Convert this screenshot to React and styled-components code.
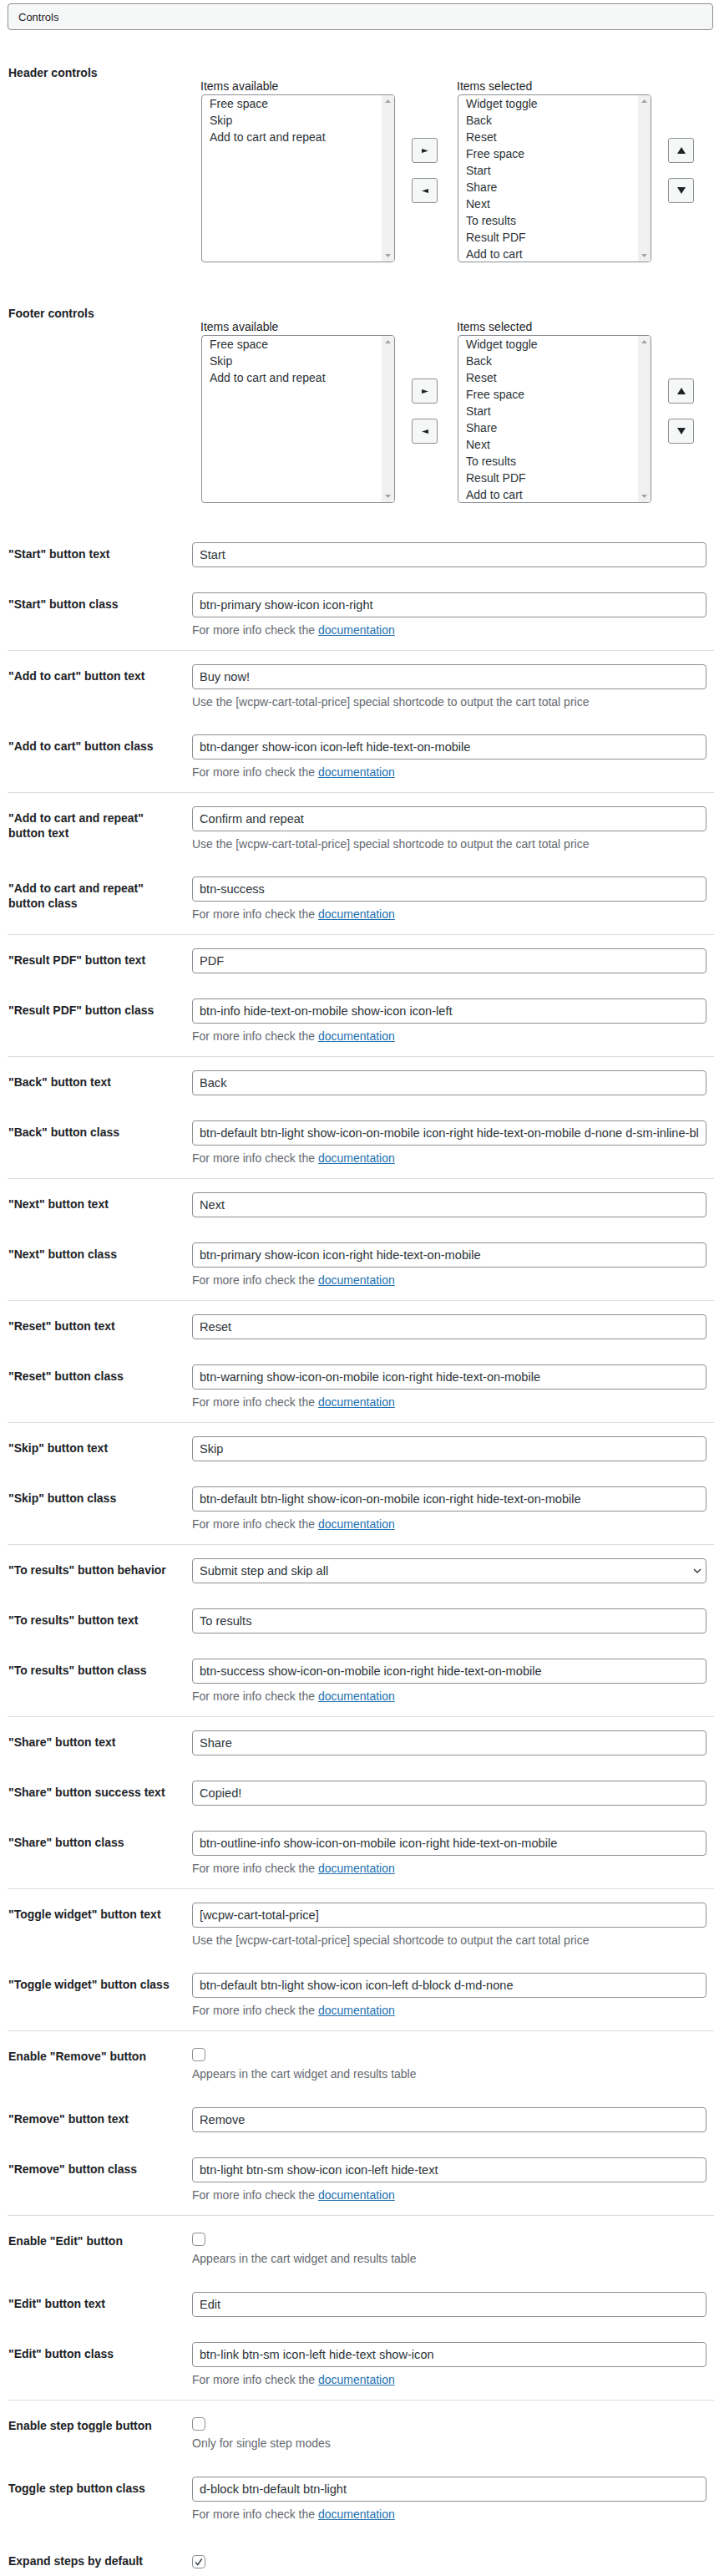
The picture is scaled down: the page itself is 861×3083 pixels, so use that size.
import React from "react";
import styled, { createGlobalStyle } from "styled-components";

const SHORTCODE =
  "Use the [wcpw-cart-total-price] special shortcode to output the cart total price";
const APPEARS = "Appears in the cart widget and results table";

const available = ["Free space", "Skip", "Add to cart and repeat"];
const selected = [
  "Widget toggle",
  "Back",
  "Reset",
  "Free space",
  "Start",
  "Share",
  "Next",
  "To results",
  "Result PDF",
  "Add to cart",
];

const sections = [
  [
    { label: '"Start" button text', value: "Start" },
    { label: '"Start" button class', value: "btn-primary show-icon icon-right", doc: true },
  ],
  [
    { label: '"Add to cart" button text', value: "Buy now!", desc: SHORTCODE },
    {
      label: '"Add to cart" button class',
      value: "btn-danger show-icon icon-left hide-text-on-mobile",
      doc: true,
    },
  ],
  [
    { label: '"Add to cart and repeat" button text', value: "Confirm and repeat", desc: SHORTCODE },
    { label: '"Add to cart and repeat" button class', value: "btn-success", doc: true },
  ],
  [
    { label: '"Result PDF" button text', value: "PDF" },
    {
      label: '"Result PDF" button class',
      value: "btn-info hide-text-on-mobile show-icon icon-left",
      doc: true,
    },
  ],
  [
    { label: '"Back" button text', value: "Back" },
    {
      label: '"Back" button class',
      value:
        "btn-default btn-light show-icon-on-mobile icon-right hide-text-on-mobile d-none d-sm-inline-block",
      doc: true,
    },
  ],
  [
    { label: '"Next" button text', value: "Next" },
    {
      label: '"Next" button class',
      value: "btn-primary show-icon icon-right hide-text-on-mobile",
      doc: true,
    },
  ],
  [
    { label: '"Reset" button text', value: "Reset" },
    {
      label: '"Reset" button class',
      value: "btn-warning show-icon-on-mobile icon-right hide-text-on-mobile",
      doc: true,
    },
  ],
  [
    { label: '"Skip" button text', value: "Skip" },
    {
      label: '"Skip" button class',
      value: "btn-default btn-light show-icon-on-mobile icon-right hide-text-on-mobile",
      doc: true,
    },
  ],
  [
    { label: '"To results" button behavior', select: "Submit step and skip all" },
    { label: '"To results" button text', value: "To results" },
    {
      label: '"To results" button class',
      value: "btn-success show-icon-on-mobile icon-right hide-text-on-mobile",
      doc: true,
    },
  ],
  [
    { label: '"Share" button text', value: "Share" },
    { label: '"Share" button success text', value: "Copied!" },
    {
      label: '"Share" button class',
      value: "btn-outline-info show-icon-on-mobile icon-right hide-text-on-mobile",
      doc: true,
    },
  ],
  [
    { label: '"Toggle widget" button text', value: "[wcpw-cart-total-price]", desc: SHORTCODE },
    {
      label: '"Toggle widget" button class',
      value: "btn-default btn-light show-icon icon-left d-block d-md-none",
      doc: true,
    },
  ],
  [
    { label: 'Enable "Remove" button', checkbox: true, desc: APPEARS },
    { label: '"Remove" button text', value: "Remove" },
    {
      label: '"Remove" button class',
      value: "btn-light btn-sm show-icon icon-left hide-text",
      doc: true,
    },
  ],
  [
    { label: 'Enable "Edit" button', checkbox: true, desc: APPEARS },
    { label: '"Edit" button text', value: "Edit" },
    {
      label: '"Edit" button class',
      value: "btn-link btn-sm icon-left hide-text show-icon",
      doc: true,
    },
  ],
  [
    { label: "Enable step toggle button", checkbox: true, desc: "Only for single step modes" },
    { label: "Toggle step button class", value: "d-block btn-default btn-light", doc: true },
    { label: "Expand steps by default", checkbox: true, checked: true, late: true },
  ],
];

const Tri = ({ dir, w, h }) => {
  const pts = {
    right: `0,0 ${w},${h / 2} 0,${h}`,
    left: `${w},0 0,${h / 2} ${w},${h}`,
    up: `0,${h} ${w / 2},0 ${w},${h}`,
    down: `0,0 ${w},0 ${w / 2},${h}`,
  }[dir];
  return (
    <svg width={w} height={h} viewBox={`0 0 ${w} ${h}`}>
      <polygon points={pts} fill="currentColor" />
    </svg>
  );
};

const ListBox = ({ items }) => (
  <Box>
    <Options>
      {items.map((item) => (
        <Option key={item}>{item}</Option>
      ))}
    </Options>
    <ScrollTrack>
      <Tri dir="up" w={7} h={4} />
      <Tri dir="down" w={7} h={4} />
    </ScrollTrack>
  </Box>
);

const DualList = ({ label }) => (
  <Row>
    <Th>{label}</Th>
    <DualCell>
      <ListColumn>
        <ListLabel>Items available</ListLabel>
        <ListBox items={available} />
      </ListColumn>
      <ButtonColumn $gap={20}>
        <ArrowButton>
          <Tri dir="right" w={8} h={5} />
        </ArrowButton>
        <ArrowButton>
          <Tri dir="left" w={8} h={5} />
        </ArrowButton>
      </ButtonColumn>
      <ListColumn $offset={23}>
        <ListLabel>Items selected</ListLabel>
        <ListBox items={selected} />
      </ListColumn>
      <ButtonColumn $gap={20}>
        <ArrowButton>
          <Tri dir="up" w={10} h={8} />
        </ArrowButton>
        <ArrowButton>
          <Tri dir="down" w={10} h={8} />
        </ArrowButton>
      </ButtonColumn>
    </DualCell>
  </Row>
);

const Field = ({ field }) => {
  if (field.checkbox) {
    return (
      <Row $late={field.late}>
        <Th>{field.label}</Th>
        <Td $check>
          <CheckLine $late={field.late}>
            <Check>
              {field.checked && (
                <svg width="12" height="12" viewBox="0 0 12 12">
                  <path
                    d="M2.2 6.4 L4.8 9.4 L9.8 2.4"
                    fill="none"
                    stroke="#3c434a"
                    strokeWidth="1.6"
                  />
                </svg>
              )}
            </Check>
          </CheckLine>
          {field.desc && <Desc>{field.desc}</Desc>}
        </Td>
      </Row>
    );
  }
  return (
    <Row>
      <Th>{field.label}</Th>
      <Td>
        {field.select ? (
          <SelectWrap>
            <Select defaultValue={field.select}>
              <option>{field.select}</option>
            </Select>
            <Chevron width="10" height="6" viewBox="0 0 10 6">
              <path d="M1 1 L5 5 L9 1" fill="none" stroke="#2c3338" strokeWidth="1.4" />
            </Chevron>
          </SelectWrap>
        ) : (
          <TextInput type="text" defaultValue={field.value} readOnly />
        )}
        {field.desc && <Desc>{field.desc}</Desc>}
        {field.doc && (
          <Desc>
            For more info check the <DocLink href="#">documentation</DocLink>
          </Desc>
        )}
      </Td>
    </Row>
  );
};

export default function App() {
  return (
    <Page>
      <GlobalStyle />
      <ControlsBar>Controls</ControlsBar>
      <DualList label="Header controls" />
      <DualList label="Footer controls" />
      {sections.map((fields, i) => (
        <Section key={i} $first={i === 0}>
          {fields.map((f) => (
            <Field key={f.label} field={f} />
          ))}
        </Section>
      ))}
    </Page>
  );
}

const GlobalStyle = createGlobalStyle`
  * { box-sizing: border-box; }
  body {
    margin: 0;
    background: #fff;
    color: #1d2327;
    font-family: "Liberation Sans", Arial, sans-serif;
    overflow-x: hidden;
  }
`;

const Page = styled.div`
  padding: 4px 6px 0 9px;
`;

const ControlsBar = styled.div`
  display: flex;
  align-items: center;
  height: 32px;
  padding-left: 12px;
  margin-bottom: 22px;
  margin-right: 1px;
  border: 1px solid #8c8f94;
  border-radius: 4px;
  background: #f6f7f7;
  font-size: 13px;
  color: #1d2327;
`;

const Section = styled.div`
  border-top: ${(p) => (p.$first ? "none" : "1px solid #dcdcde")};
  padding-top: ${(p) => (p.$first ? "0" : "1px")};
`;

const Row = styled.div`
  display: grid;
  grid-template-columns: 221px 1fr;
  margin-top: ${(p) => (p.$late ? "3px" : "0")};
`;

const Th = styled.div`
  padding: 20px 20px 20px 1px;
  font-size: 14px;
  font-weight: 700;
  line-height: 1.3;
  color: #1d2327;
`;

const Td = styled.div`
  padding: ${(p) => (p.$check ? "15px 9px 16px 0" : "15px 9px 15px 0")};
  min-width: 0;
`;

const DualCell = styled.div`
  display: flex;
  align-items: center;
  padding: 36px 0 32px 10px;
`;

const ListColumn = styled.div`
  display: flex;
  flex-direction: column;
  margin-left: ${(p) => p.$offset || 0}px;
`;

const ListLabel = styled.div`
  font-size: 14px;
  line-height: 18px;
  margin-bottom: 1px;
  color: #1d2327;
`;

const Box = styled.div`
  display: flex;
  width: 232px;
  height: 201px;
  margin-left: 1px;
  border: 1px solid #8c8f94;
  border-radius: 4px;
  background: #fff;
  overflow: hidden;
`;

const Options = styled.div`
  flex: 1;
  padding: 0 0 0 9px;
`;

const Option = styled.div`
  font-size: 14px;
  line-height: 20px;
  color: #2c3338;
  white-space: nowrap;
`;

const ScrollTrack = styled.div`
  display: flex;
  flex-direction: column;
  justify-content: space-between;
  align-items: center;
  width: 15px;
  padding: 5px 0 5px;
  background: #f1f1f1;
  color: #a3a3a3;
`;

const ButtonColumn = styled.div`
  display: flex;
  flex-direction: column;
  gap: 18px;
  margin-left: ${(p) => p.$gap}px;
`;

const ArrowButton = styled.button`
  display: flex;
  align-items: center;
  justify-content: center;
  width: 31px;
  height: 30px;
  padding: 0;
  border: 1px solid #8c8f94;
  border-radius: 3px;
  background: #f6f7f7;
  color: #1d2327;
`;

const TextInput = styled.input`
  display: block;
  width: 100%;
  height: 30px;
  padding: 0 8px;
  border: 1px solid #8c8f94;
  border-radius: 4px;
  background: #fff;
  font-family: inherit;
  font-size: 14.6px;
  color: #2c3338;
  outline: none;
`;

const SelectWrap = styled.div`
  position: relative;
`;

const Select = styled.select`
  display: block;
  width: 100%;
  height: 30px;
  padding: 0 24px 0 8px;
  border: 1px solid #8c8f94;
  border-radius: 4px;
  background: #fff;
  font-family: inherit;
  font-size: 14.6px;
  color: #2c3338;
  appearance: none;
  -webkit-appearance: none;
`;

const Chevron = styled.svg`
  position: absolute;
  right: 6px;
  top: 12px;
  pointer-events: none;
`;

const CheckLine = styled.div`
  padding-top: ${(p) => (p.$late ? "7px" : "4px")};
  height: ${(p) => (p.$late ? "23px" : "20px")};
`;

const Check = styled.span`
  display: flex;
  align-items: center;
  justify-content: center;
  width: 16px;
  height: 16px;
  border: 1px solid #8c8f94;
  border-radius: 4px;
  background: #fff;
`;

const Desc = styled.div`
  margin-top: 6px;
  font-size: 14px;
  line-height: 18px;
  color: #646970;
  white-space: nowrap;
`;

const DocLink = styled.a`
  color: #2271b1;
  text-decoration: underline;
`;
